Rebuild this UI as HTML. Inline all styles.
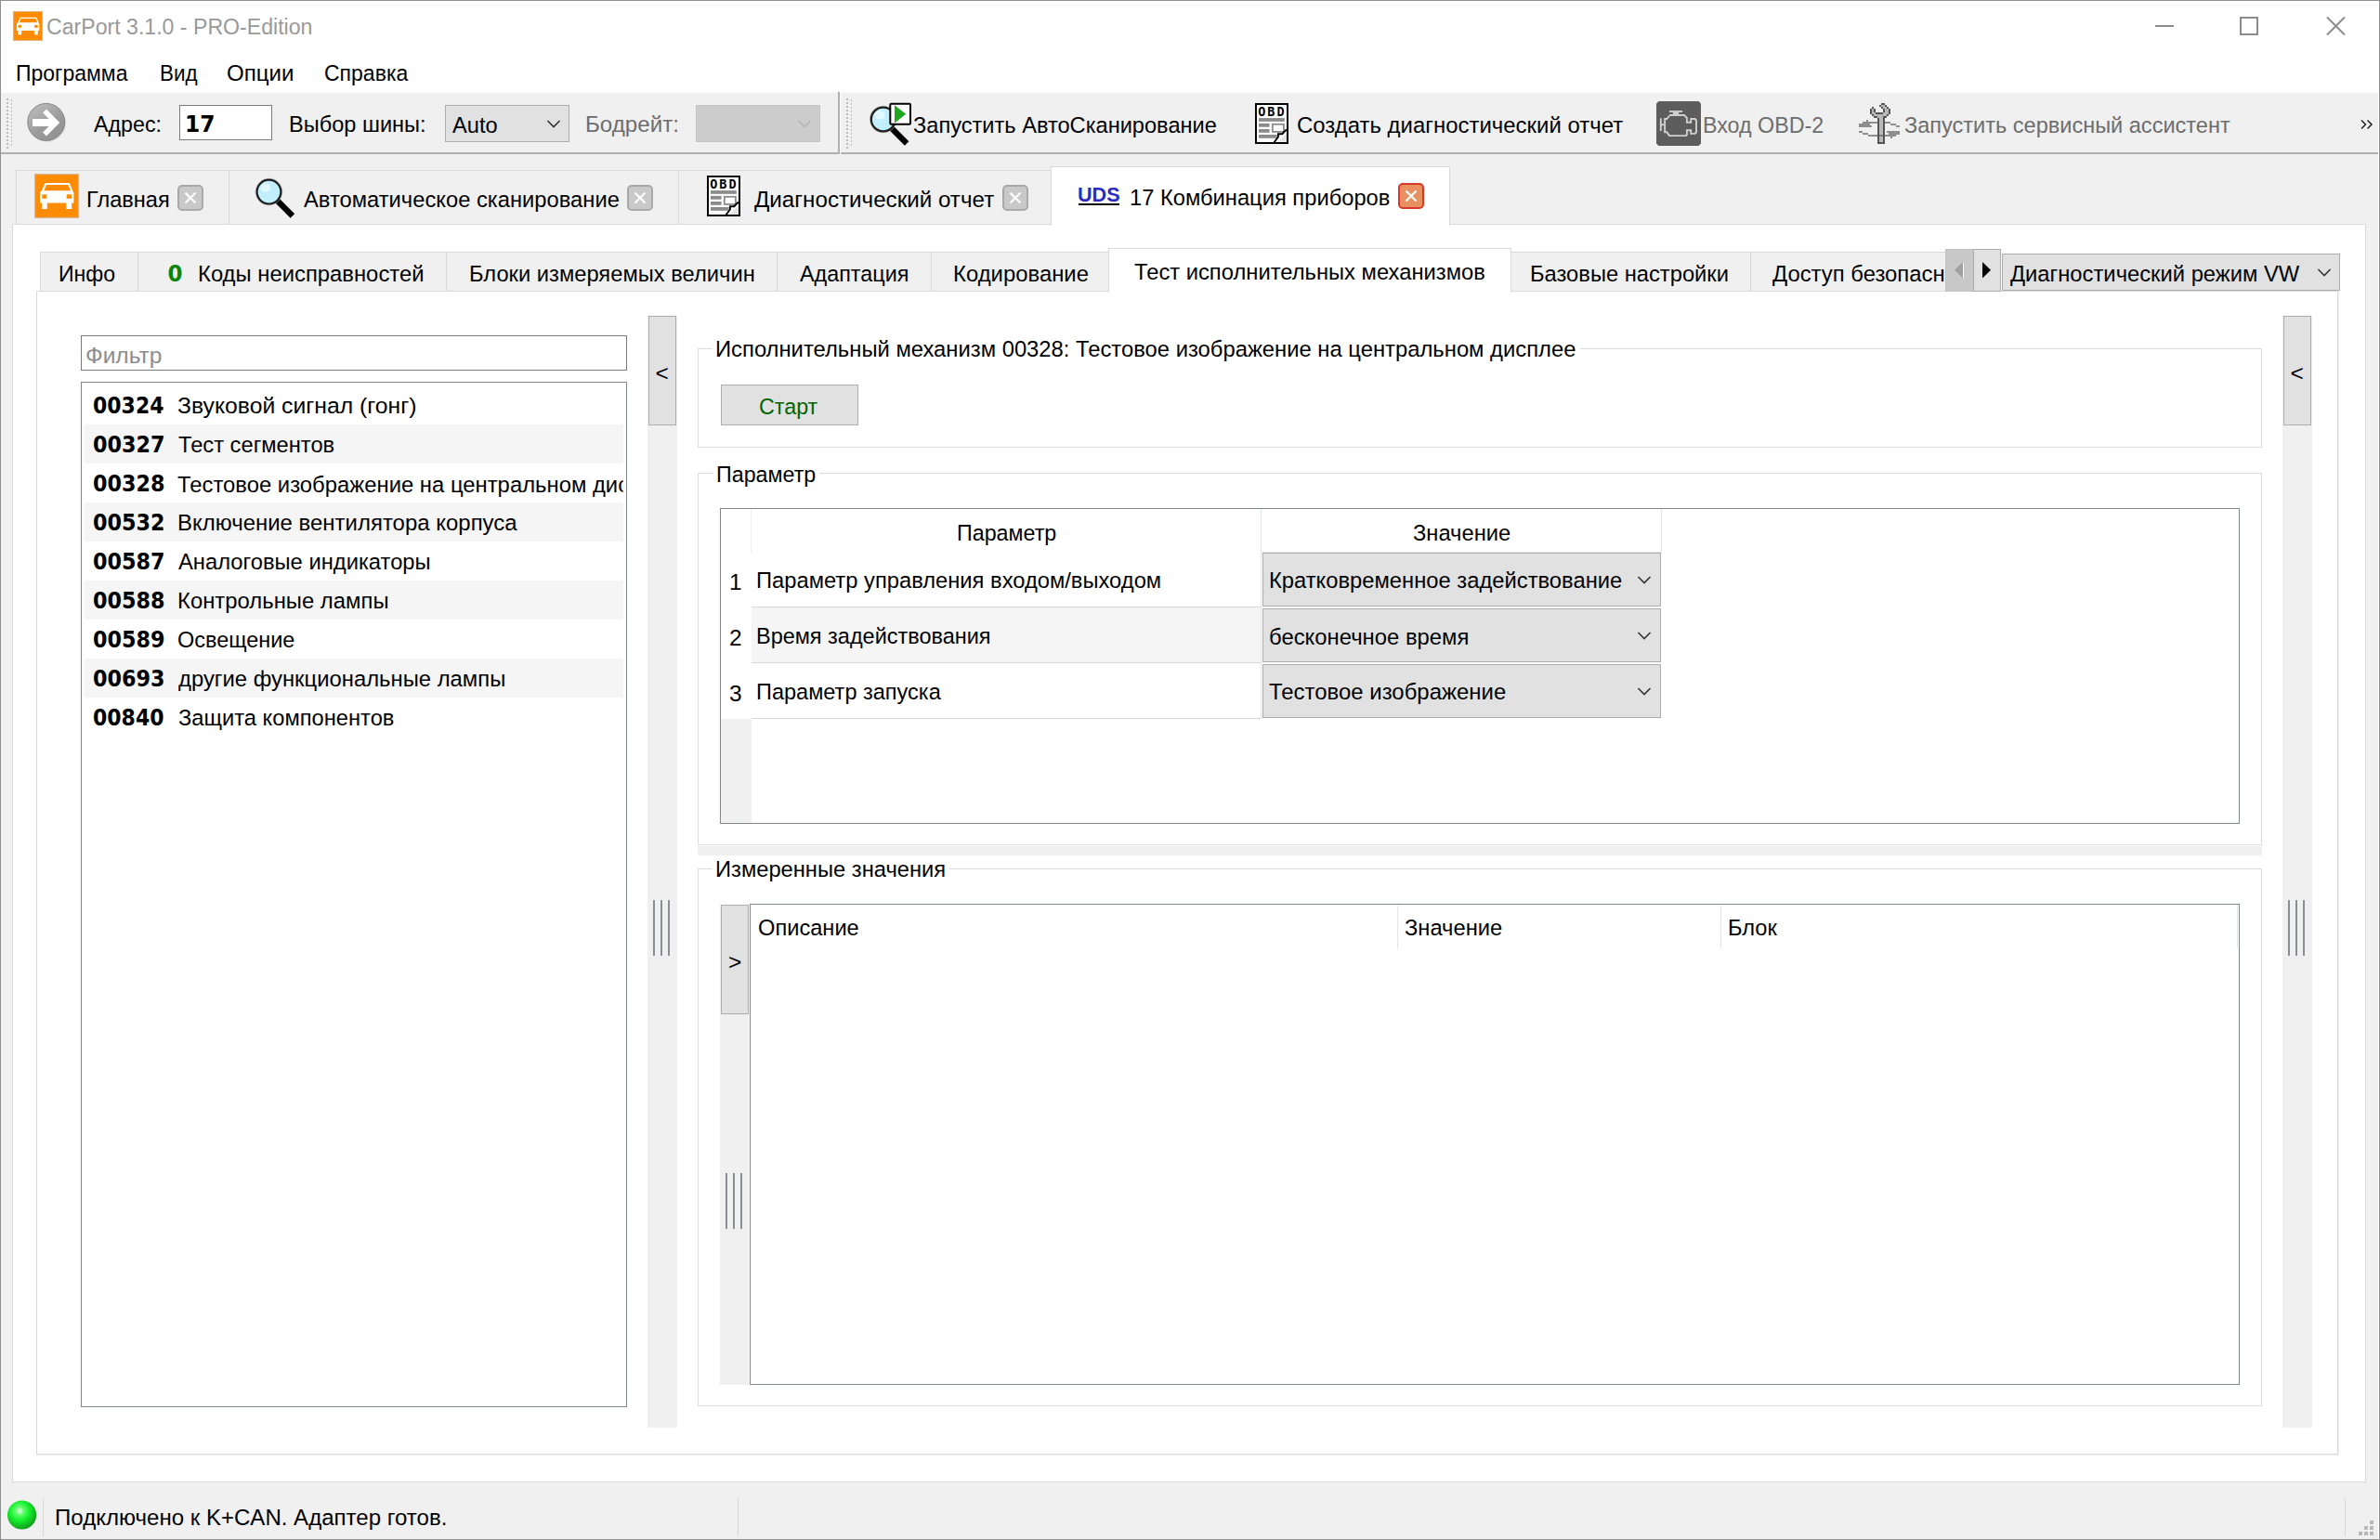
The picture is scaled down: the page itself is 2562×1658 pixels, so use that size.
<!DOCTYPE html>
<html lang="ru">
<head>
<meta charset="utf-8">
<title>CarPort 3.1.0 - PRO-Edition</title>
<style>
*{box-sizing:border-box;margin:0;padding:0}
html,body{width:2562px;height:1658px;overflow:hidden;background:#fff}
body{position:relative;font-family:"Liberation Sans","DejaVu Sans",sans-serif;font-size:24px;line-height:28px;color:#000}
.a{position:absolute}
.t{position:absolute;white-space:nowrap;font-size:24.500px;line-height:28px}
.b{font-family:"DejaVu Sans Condensed","Liberation Sans",sans-serif;font-weight:bold;font-size:24px}
.g{color:#6d6d6d}
.bg{background:#f0f0f0}
.btn{position:absolute;background:#e1e1e1;border:1px solid #adadad}
.box{position:absolute;border:1px solid #dcdcdc}
.lst{position:absolute;border:1px solid #828790;background:#fff}
.cx{position:absolute;width:28px;height:28px;border:2px solid #a9a9a9;border-radius:5px;background:#c9c9c9}
.cx svg{position:absolute;left:4px;top:4px}
.row{position:absolute;left:91px;width:580px;height:42px}
.row.alt{background:#f5f5f5}
.row .n{position:absolute;left:10px;top:7px;font-size:24px;line-height:28px;font-family:"DejaVu Sans Condensed","Liberation Sans",sans-serif;font-weight:bold}
.row .d{position:absolute;left:101px;top:7px;white-space:nowrap;overflow:hidden;width:479px;height:30px}
.gl{position:absolute;width:2px;background:#8a8d94}
.vs{position:absolute;width:1px;background:#d7d7d7}
</style>
</head>
<body>
<!-- window frame -->
<div class="a" id="frame" style="left:0;top:0;width:2562px;height:1658px;border:1px solid #8f8f8f;z-index:50;pointer-events:none"></div>

<!-- TITLE BAR -->
<div id="titlebar">
<svg class="a" id="ic-car1" style="left:14px;top:12px" width="32" height="32" viewBox="0 0 48 48"><rect x=".5" y=".5" width="47" height="47" fill="#ff8c00" stroke="#d9b088" stroke-width="1.600"/>
<path d="M8.800 19L12.200 11H37.100L40.500 19" fill="none" stroke="#fff" stroke-width="2.100" stroke-linejoin="round"/>
<path d="M9 18.300H39.400Q42.400 18.300 42.400 21.300V31.400H6V21.300Q6 18.300 9 18.300z" fill="#fff"/>
<rect x="8" y="31" width="5.800" height="7" fill="#fff"/><rect x="34.400" y="31" width="5.800" height="7" fill="#fff"/>
<rect x="8.300" y="22.300" width="5" height="4.500" fill="#ff8c00"/><rect x="34.700" y="22.300" width="5.300" height="4.500" fill="#ff8c00"/></svg>
<div id="t1" class="t" style="left:50.4px;top:15px;font-size:23px;color:#999;transform:scaleX(1.0048);transform-origin:0 0">CarPort 3.1.0 - PRO-Edition</div>
<svg class="a" style="left:2310px;top:8px" width="230" height="40" viewBox="0 0 230 40" fill="none" stroke="#8c8c8c" stroke-width="2">
<path d="M10 20h20"/><rect x="102" y="11" width="18" height="18"/><path d="M195 10.500l19 19M214 10.500l-19 19"/>
</svg>
</div>

<!-- MENU -->
<div id="menu">
<div id="t2" class="t" style="left:16.6px;top:65px;transform:scaleX(0.9381);transform-origin:0 0">Программа</div>
<div id="t3" class="t" style="left:171.5px;top:65px;transform:scaleX(0.9172);transform-origin:0 0">Вид</div>
<div id="t4" class="t" style="left:244.0px;top:65px;transform:scaleX(0.9832);transform-origin:0 0">Опции</div>
<div id="t5" class="t" style="left:349.0px;top:65px;transform:scaleX(0.9389);transform-origin:0 0">Справка</div>
</div>

<!-- TOOLBAR -->
<div id="toolbar">
<div class="a bg" style="left:1px;top:99px;width:2559px;height:1558px"></div>
<div class="a" style="left:1px;top:98px;width:2559px;height:2px;background:#fcfcfc"></div>
<div class="a" style="left:1px;top:164px;width:2559px;height:2px;background:#b0b0b0"></div>
<div class="a" style="left:902px;top:99px;width:2px;height:67px;background:#b0b0b0"></div>
<div class="a" style="left:904px;top:99px;width:1px;height:67px;background:#fcfcfc"></div>
</div>


<!-- toolbar 1 contents -->
<div class="a" id="grip1" style="left:7px;top:106px;width:2px;height:54px;background-image:repeating-linear-gradient(to bottom,#bcbcbc 0 2px,transparent 2px 4px)"></div>
<div class="a" style="left:12px;top:107px;width:1px;height:52px;background-image:repeating-linear-gradient(to bottom,#bcbcbc 0 2px,transparent 2px 4px)"></div>
<div class="a" id="grip2" style="left:911px;top:106px;width:2px;height:54px;background-image:repeating-linear-gradient(to bottom,#bcbcbc 0 2px,transparent 2px 4px)"></div>
<div class="a" style="left:916px;top:107px;width:1px;height:52px;background-image:repeating-linear-gradient(to bottom,#bcbcbc 0 2px,transparent 2px 4px)"></div>
<svg class="a" style="left:28px;top:109px" width="46" height="46" viewBox="0 0 46 46">
<defs><linearGradient id="gg" x1="0.15" y1="0" x2="0.85" y2="1"><stop offset="0" stop-color="#bdbdbd"/><stop offset=".55" stop-color="#9c9c9c"/><stop offset="1" stop-color="#8f8f8f"/></linearGradient></defs>
<circle cx="22.600" cy="23.400" r="20.300" fill="#cfcfcf" opacity=".6"/>
<circle cx="21.800" cy="22.400" r="20" fill="url(#gg)" stroke="#868686" stroke-width="1"/>
<path d="M7 19H24.700L18.100 12.400L21.900 8.600L36.300 23L21.900 37.400L18.100 33.600L24.700 27H7z" fill="#fff"/>
</svg>
<div id="t6" class="t" style="left:101.2px;top:120px;transform:scaleX(0.9491);transform-origin:0 0">Адрес:</div>
<div class="a" style="left:193px;top:113px;width:100px;height:38px;background:#fff;border:1px solid #7a7a7a"></div>
<div id="t7" class="t b" style="left:198.6px;top:120px;transform:scaleX(1.0825);transform-origin:0 0">17</div>
<div id="t8" class="t" style="left:311.0px;top:120px;transform:scaleX(0.9626);transform-origin:0 0">Выбор шины:</div>
<div class="btn" style="left:479px;top:113px;width:134px;height:40px"></div>
<div id="t9" class="t" style="left:486.8px;top:121px;transform:scaleX(0.9638);transform-origin:0 0">Auto</div>
<svg class="a" style="left:587px;top:127px" width="18" height="12" viewBox="0 0 18 12"><path d="M2.500 3l6.500 6.500l6.500-6.500" fill="none" stroke="#333" stroke-width="1.600"/></svg>
<div id="t10" class="t g" style="left:629.8px;top:120px;transform:scaleX(0.9858);transform-origin:0 0">Бодрейт:</div>
<div class="a" style="left:749px;top:113px;width:134px;height:40px;background:#ccc;border:1px solid #c4c4c4"></div>
<svg class="a" style="left:857px;top:127px" width="18" height="12" viewBox="0 0 18 12"><path d="M2.500 3l6.500 6.500l6.500-6.500" fill="none" stroke="#b4b4b4" stroke-width="1.600"/></svg>

<!-- toolbar 2 contents -->
<svg class="a" id="ic-scan" style="left:934px;top:108px" width="50" height="50" viewBox="0 0 50 50">
<path d="M25.25 29.50L42.15 46.40" stroke="#000" stroke-width="6.400" stroke-linecap="butt"/>
<circle cx="16.75" cy="20.5" r="14.200" fill="none" stroke="#9a9a9a" stroke-width="1.200" opacity=".55"/>
<circle cx="16.75" cy="20.5" r="12.900" fill="#c1effd" stroke="#1e1e1e" stroke-width="2.200"/>
<ellipse cx="13.25" cy="16.0" rx="5.500" ry="4.800" fill="#e3f8ff" opacity=".9"/>
<rect x="24.300" y="3.800" width="21.700" height="22" rx="1" fill="#fff" stroke="#000" stroke-width="2"/>
<path d="M29 5.200v19.200l12.200-9.600z" fill="#1fa722"/>
</svg>
<div id="t11" class="t" style="left:983.2px;top:121px;transform:scaleX(0.9635);transform-origin:0 0">Запустить АвтоСканирование</div>
<svg class="a ic-obd" style="left:1351px;top:111px" width="36" height="44" viewBox="0 0 36 44"><rect x="1" y="1" width="34" height="42" fill="#fff" stroke="#000" stroke-width="2"/>
<path d="M24.500 41.800L34 32.500V41.800z" fill="#e4e4e4"/>
<text x="3.300" y="13.600" font-family="DejaVu Sans Mono,Liberation Mono,monospace" font-weight="bold" font-size="13.500" letter-spacing="1.950" fill="#000">OBD</text>
<rect x="4" y="16.100" width="27.800" height="3.700" fill="#8b8b8b"/>
<rect x="4" y="21.900" width="11.600" height="3.800" fill="#8b8b8b"/>
<rect x="4" y="28" width="11.600" height="3.800" fill="#8b8b8b"/>
<rect x="4" y="34" width="19.700" height="3.800" fill="#8b8b8b"/>
<rect x="18.800" y="22.800" width="12.100" height="8.100" fill="#fff" stroke="#8b8b8b" stroke-width="1.800"/>
<path d="M20.600 42.200L24.900 36.500V33.200H29.300L33 29.300H34.500" fill="none" stroke="#000" stroke-width="1.900"/></svg>
<div id="t12" class="t" style="left:1396.0px;top:121px;transform:scaleX(0.9770);transform-origin:0 0">Создать диагностический отчет</div>
<svg class="a ic-eng" style="left:1783px;top:109px" width="48" height="48" viewBox="0 0 48 48">
<path d="M2.500 0H45.500L48 2.500V45.500L45.500 48H2.500L0 45.500V2.500z" fill="#5d5d5d"/>
<g fill="none" stroke="#d0d0d0" stroke-width="1.900" stroke-linejoin="miter">
<path d="M13.900 11H28"/>
<path d="M13.900 15H30L32.900 17.900V22.800H37.200V19H41.600L43 20.400V33.600L41.600 34.900H37.200V31.200H32.900V36L31.800 37.100H14L11.300 33.200H9.100V19H11.300L13.900 15.900"/>
<path d="M4.800 18.200V32M5.700 25.300H8.200"/>
</g>
<rect x="17.900" y="11.900" width="6.300" height="2.200" fill="#d0d0d0"/>
</svg>
<div id="t13" class="t g" style="left:1833.1px;top:121px;transform:scaleX(0.9488);transform-origin:0 0">Вход OBD-2</div>
<svg class="a ic-wr" style="left:2001px;top:111px" width="44" height="44" viewBox="0 0 44 44" shape-rendering="crispEdges"><rect x="8" y="18" width="2" height="2" fill="#8e8e8e"/><rect x="4" y="20" width="16" height="2" fill="#8e8e8e"/><rect x="28" y="20" width="6" height="2" fill="#8e8e8e"/><rect x="0" y="22" width="12" height="2" fill="#8e8e8e"/><rect x="34" y="22" width="6" height="2" fill="#8e8e8e"/><rect x="0" y="24" width="14" height="2" fill="#8e8e8e"/><rect x="40" y="24" width="4" height="2" fill="#8e8e8e"/><rect x="0" y="30" width="4" height="2" fill="#8e8e8e"/><rect x="30" y="30" width="14" height="2" fill="#8e8e8e"/><rect x="4" y="32" width="6" height="2" fill="#8e8e8e"/><rect x="32" y="32" width="12" height="2" fill="#8e8e8e"/><rect x="10" y="34" width="30" height="2" fill="#8e8e8e"/><rect x="34" y="36" width="2" height="2" fill="#8e8e8e"/><rect x="24" y="0" width="4" height="2" fill="#555"/><rect x="22" y="2" width="2" height="2" fill="#555"/><rect x="24" y="2" width="4" height="2" fill="#b8b8b8"/><rect x="28" y="2" width="2" height="2" fill="#555"/><rect x="14" y="4" width="2" height="2" fill="#555"/><rect x="24" y="4" width="2" height="2" fill="#555"/><rect x="26" y="4" width="4" height="2" fill="#b8b8b8"/><rect x="30" y="4" width="2" height="2" fill="#555"/><rect x="12" y="6" width="2" height="2" fill="#555"/><rect x="14" y="6" width="2" height="2" fill="#b8b8b8"/><rect x="16" y="6" width="2" height="2" fill="#555"/><rect x="26" y="6" width="2" height="2" fill="#555"/><rect x="28" y="6" width="4" height="2" fill="#b8b8b8"/><rect x="32" y="6" width="2" height="2" fill="#555"/><rect x="12" y="8" width="2" height="2" fill="#555"/><rect x="14" y="8" width="2" height="2" fill="#b8b8b8"/><rect x="16" y="8" width="2" height="2" fill="#555"/><rect x="26" y="8" width="2" height="2" fill="#555"/><rect x="28" y="8" width="4" height="2" fill="#b8b8b8"/><rect x="32" y="8" width="2" height="2" fill="#555"/><rect x="12" y="10" width="2" height="2" fill="#555"/><rect x="14" y="10" width="4" height="2" fill="#b8b8b8"/><rect x="18" y="10" width="8" height="2" fill="#555"/><rect x="26" y="10" width="6" height="2" fill="#b8b8b8"/><rect x="32" y="10" width="2" height="2" fill="#555"/><rect x="14" y="12" width="2" height="2" fill="#555"/><rect x="16" y="12" width="14" height="2" fill="#b8b8b8"/><rect x="30" y="12" width="2" height="2" fill="#555"/><rect x="16" y="14" width="4" height="2" fill="#555"/><rect x="20" y="14" width="6" height="2" fill="#b8b8b8"/><rect x="26" y="14" width="4" height="2" fill="#555"/><rect x="20" y="16" width="2" height="2" fill="#555"/><rect x="22" y="16" width="4" height="2" fill="#b8b8b8"/><rect x="26" y="16" width="2" height="2" fill="#555"/><rect x="20" y="18" width="2" height="2" fill="#555"/><rect x="22" y="18" width="4" height="2" fill="#b8b8b8"/><rect x="26" y="18" width="2" height="2" fill="#555"/><rect x="20" y="20" width="2" height="2" fill="#555"/><rect x="22" y="20" width="4" height="2" fill="#b8b8b8"/><rect x="26" y="20" width="2" height="2" fill="#555"/><rect x="20" y="22" width="2" height="2" fill="#555"/><rect x="22" y="22" width="4" height="2" fill="#b8b8b8"/><rect x="26" y="22" width="2" height="2" fill="#555"/><rect x="20" y="24" width="2" height="2" fill="#555"/><rect x="22" y="24" width="4" height="2" fill="#b8b8b8"/><rect x="26" y="24" width="2" height="2" fill="#555"/><rect x="20" y="26" width="2" height="2" fill="#555"/><rect x="22" y="26" width="4" height="2" fill="#b8b8b8"/><rect x="26" y="26" width="2" height="2" fill="#555"/><rect x="20" y="28" width="2" height="2" fill="#555"/><rect x="22" y="28" width="4" height="2" fill="#b8b8b8"/><rect x="26" y="28" width="2" height="2" fill="#555"/><rect x="20" y="30" width="2" height="2" fill="#555"/><rect x="22" y="30" width="4" height="2" fill="#b8b8b8"/><rect x="26" y="30" width="2" height="2" fill="#555"/><rect x="20" y="32" width="2" height="2" fill="#555"/><rect x="22" y="32" width="4" height="2" fill="#b8b8b8"/><rect x="26" y="32" width="2" height="2" fill="#555"/><rect x="20" y="34" width="2" height="2" fill="#555"/><rect x="22" y="34" width="4" height="2" fill="#b8b8b8"/><rect x="26" y="34" width="2" height="2" fill="#555"/><rect x="20" y="36" width="2" height="2" fill="#555"/><rect x="22" y="36" width="4" height="2" fill="#b8b8b8"/><rect x="26" y="36" width="2" height="2" fill="#555"/><rect x="20" y="38" width="2" height="2" fill="#555"/><rect x="22" y="38" width="4" height="2" fill="#b8b8b8"/><rect x="26" y="38" width="2" height="2" fill="#555"/><rect x="20" y="40" width="2" height="2" fill="#555"/><rect x="22" y="40" width="4" height="2" fill="#b8b8b8"/><rect x="26" y="40" width="2" height="2" fill="#555"/><rect x="20" y="42" width="8" height="2" fill="#555"/><rect x="22" y="34" width="4" height="2" fill="#7d7d7d"/></svg>
<div id="t14" class="t g" style="left:2050.0px;top:121px;transform:scaleX(0.9606);transform-origin:0 0">Запустить сервисный ассистент</div>
<svg class="a" style="left:2540px;top:127px" width="16" height="14" viewBox="0 0 16 14"><path d="M2 2.500l4.500 4.500l-4.500 4.500M8.500 2.500l4.500 4.500l-4.500 4.500" fill="none" stroke="#222" stroke-width="1.500"/></svg>


<!-- OUTER TABS -->
<div id="tabs1">
<div class="a" style="left:17px;top:183px;width:1115px;height:59px;border:1px solid #d9d9d9;border-bottom:none;background:#f0f0f0"></div>
<div class="vs" style="left:246px;top:184px;height:57px;background:#d9d9d9"></div>
<div class="vs" style="left:730px;top:184px;height:57px;background:#d9d9d9"></div>
<!-- outer panel -->
<div class="a" style="left:13px;top:241px;width:2534px;height:1355px;background:#fff;border:1px solid #d9d9d9"></div>
<!-- active tab -->
<div class="a" style="left:1131px;top:179px;width:430px;height:64px;background:#fff;border:1px solid #d9d9d9;border-bottom:none"></div>
<svg class="a" id="ic-car2" style="left:37px;top:187px" width="48" height="48" viewBox="0 0 48 48"><rect x=".5" y=".5" width="47" height="47" fill="#ff8c00" stroke="#d9b088" stroke-width="1.600"/>
<path d="M8.800 19L12.200 11H37.100L40.500 19" fill="none" stroke="#fff" stroke-width="2.100" stroke-linejoin="round"/>
<path d="M9 18.300H39.400Q42.400 18.300 42.400 21.300V31.400H6V21.300Q6 18.300 9 18.300z" fill="#fff"/>
<rect x="8" y="31" width="5.800" height="7" fill="#fff"/><rect x="34.400" y="31" width="5.800" height="7" fill="#fff"/>
<rect x="8.300" y="22.300" width="5" height="4.500" fill="#ff8c00"/><rect x="34.700" y="22.300" width="5.300" height="4.500" fill="#ff8c00"/></svg>
<div id="t15" class="t" style="left:93.4px;top:201px;transform:scaleX(0.9622);transform-origin:0 0">Главная</div>
<div class="cx" style="left:191px;top:199px"><svg width="16" height="16" viewBox="0 0 16 16"><path d="M2.500 2.500l11 11M13.500 2.500l-11 11" stroke="#fff" stroke-width="2.200" fill="none"/></svg></div>
<svg class="a" id="ic-mag" style="left:272px;top:189px" width="48" height="48" viewBox="0 0 48 48">
<path d="M26.00 26.60L42.90 43.50" stroke="#000" stroke-width="6.400" stroke-linecap="butt"/>
<circle cx="17.5" cy="17.6" r="14.200" fill="none" stroke="#9a9a9a" stroke-width="1.200" opacity=".55"/>
<circle cx="17.5" cy="17.6" r="12.900" fill="#c1effd" stroke="#1e1e1e" stroke-width="2.200"/>
<ellipse cx="14.0" cy="13.100000000000001" rx="5.500" ry="4.800" fill="#e3f8ff" opacity=".9"/>
</svg>
<div id="t16" class="t" style="left:327.0px;top:201px;transform:scaleX(0.9690);transform-origin:0 0">Автоматическое сканирование</div>
<div class="cx" style="left:675px;top:199px"><svg width="16" height="16" viewBox="0 0 16 16"><path d="M2.500 2.500l11 11M13.500 2.500l-11 11" stroke="#fff" stroke-width="2.200" fill="none"/></svg></div>
<svg class="a ic-obd" style="left:761px;top:189px" width="36" height="44" viewBox="0 0 36 44"><rect x="1" y="1" width="34" height="42" fill="#fff" stroke="#000" stroke-width="2"/>
<path d="M24.500 41.800L34 32.500V41.800z" fill="#e4e4e4"/>
<text x="3.300" y="13.600" font-family="DejaVu Sans Mono,Liberation Mono,monospace" font-weight="bold" font-size="13.500" letter-spacing="1.950" fill="#000">OBD</text>
<rect x="4" y="16.100" width="27.800" height="3.700" fill="#8b8b8b"/>
<rect x="4" y="21.900" width="11.600" height="3.800" fill="#8b8b8b"/>
<rect x="4" y="28" width="11.600" height="3.800" fill="#8b8b8b"/>
<rect x="4" y="34" width="19.700" height="3.800" fill="#8b8b8b"/>
<rect x="18.800" y="22.800" width="12.100" height="8.100" fill="#fff" stroke="#8b8b8b" stroke-width="1.800"/>
<path d="M20.600 42.200L24.900 36.500V33.200H29.300L33 29.300H34.500" fill="none" stroke="#000" stroke-width="1.900"/></svg>
<div id="t17" class="t" style="left:811.8px;top:201px;transform:scaleX(0.9864);transform-origin:0 0">Диагностический отчет</div>
<div class="cx" style="left:1079px;top:199px"><svg width="16" height="16" viewBox="0 0 16 16"><path d="M2.500 2.500l11 11M13.500 2.500l-11 11" stroke="#fff" stroke-width="2.200" fill="none"/></svg></div>
<div id="t18" class="t" style="left:1160.2px;top:198px;font-size:21.500px;font-weight:bold;color:#2a2ac4;line-height:24px;transform:scaleX(1.0046);transform-origin:0 0">UDS</div>
<div class="a" style="left:1161px;top:219px;width:44px;height:2px;background:#000"></div>
<div id="t19" class="t" style="left:1216.0px;top:199px;transform:scaleX(0.9678);transform-origin:0 0">17 Комбинация приборов</div>
<div class="cx" style="left:1505px;top:197px;background:#e8905f;border-color:#d9372a"><svg width="16" height="16" viewBox="0 0 16 16"><path d="M2.500 2.500l11 11M13.500 2.500l-11 11" stroke="#fff" stroke-width="2.200" fill="none"/></svg></div>
</div>

<!-- INNER TABS -->
<div id="tabs2">
<div class="a" style="left:43px;top:271px;width:2052px;height:43px;border:1px solid #d9d9d9;border-bottom:none;border-right:none;background:#f0f0f0"></div>
<div class="vs" style="left:148px;top:272px;height:41px;background:#d9d9d9"></div>
<div class="vs" style="left:480px;top:272px;height:41px;background:#d9d9d9"></div>
<div class="vs" style="left:836px;top:272px;height:41px;background:#d9d9d9"></div>
<div class="vs" style="left:1002px;top:272px;height:41px;background:#d9d9d9"></div>
<div class="vs" style="left:1884px;top:272px;height:41px;background:#d9d9d9"></div>
<!-- inner panel -->
<div class="a" style="left:39px;top:313px;width:2478px;height:1253px;background:#fff;border:1px solid #d9d9d9"></div>
<div class="a" style="left:2517px;top:314px;width:1px;height:1253px;background:#efefef"></div>
<div class="a" style="left:40px;top:1566px;width:2478px;height:1px;background:#efefef"></div>
<div class="a" style="left:1193px;top:267px;width:434px;height:48px;background:#fff;border:1px solid #d9d9d9;border-bottom:none"></div>
<div id="t20" class="t" style="left:63.0px;top:281px;transform:scaleX(0.9423);transform-origin:0 0">Инфо</div>
<div id="t21" class="t b" style="left:180.5px;top:280px;color:#0a850a;font-size:25.500px">0</div>
<div id="t22" class="t" style="left:213.0px;top:281px;transform:scaleX(0.9726);transform-origin:0 0">Коды неисправностей</div>
<div id="t23" class="t" style="left:504.8px;top:281px;transform:scaleX(0.9682);transform-origin:0 0">Блоки измеряемых величин</div>
<div id="t24" class="t" style="left:860.8px;top:281px;transform:scaleX(0.9537);transform-origin:0 0">Адаптация</div>
<div id="t25" class="t" style="left:1026.2px;top:281px;transform:scaleX(0.9743);transform-origin:0 0">Кодирование</div>
<div id="t26" class="t" style="left:1221.0px;top:279px;transform:scaleX(0.9693);transform-origin:0 0">Тест исполнительных механизмов</div>
<div id="t27" class="t" style="left:1647.0px;top:281px;transform:scaleX(0.9679);transform-origin:0 0">Базовые настройки</div>
<div id="t28" class="t" style="left:1908.4px;top:281px;width:190.7px;overflow:hidden;transform:scaleX(0.9734);transform-origin:0 0">Доступ безопасности</div>
<div class="a" style="left:2094px;top:268px;width:31px;height:46px;background:#c8c8c8;border:1px solid #c0c0c0"></div>
<svg class="a" style="left:2102px;top:280px" width="14" height="22" viewBox="0 0 14 22"><path d="M11 2v17.500l-9-8.750z" fill="#a0a0a0"/><path d="M11.500 3v16.500" stroke="#fff" stroke-width="1"/></svg>
<div class="btn" style="left:2124px;top:268px;width:30px;height:46px"></div>
<svg class="a" style="left:2131px;top:280px" width="14" height="22" viewBox="0 0 14 22"><path d="M3 2v17.500l9-8.750z" fill="#000"/></svg>
<div class="btn" style="left:2155px;top:273px;width:364px;height:40px"></div>
<div id="t29" class="t" style="left:2163.6px;top:281px;transform:scaleX(0.9699);transform-origin:0 0">Диагностический режим VW</div>
<svg class="a" style="left:2493px;top:287px" width="18" height="12" viewBox="0 0 18 12"><path d="M2.500 3l6.500 6.500l6.500-6.500" fill="none" stroke="#333" stroke-width="1.600"/></svg>
</div>

<!-- STATUS BAR -->
<div id="status">
<svg class="a" style="left:6px;top:1613px" width="36" height="36" viewBox="0 0 36 36">
<defs><radialGradient id="led" cx=".42" cy=".36" r=".62"><stop offset="0" stop-color="#ecffec"/><stop offset=".24" stop-color="#5cff68"/><stop offset=".55" stop-color="#14ee2c"/><stop offset="1" stop-color="#13a31d"/></radialGradient></defs>
<circle cx="17.600" cy="18" r="15.600" fill="url(#led)"/>
</svg>
<div class="vs" style="left:46px;top:1613px;height:41px"></div>
<div class="vs" style="left:794px;top:1613px;height:41px"></div>
<div class="vs" style="left:2524px;top:1613px;height:41px"></div>
<div id="t30" class="t" style="left:59.0px;top:1620px;transform:scaleX(0.9814);transform-origin:0 0">Подключено к K+CAN. Адаптер готов.</div>
<svg class="a" style="left:2539px;top:1637px" width="16" height="16" viewBox="0 0 16 16" fill="#b8b8b8" shape-rendering="crispEdges"><rect x="12" y="0" width="4" height="4"/><rect x="6" y="6" width="4" height="4"/><rect x="12" y="6" width="4" height="4"/><rect x="0" y="12" width="4" height="4"/><rect x="6" y="12" width="4" height="4"/><rect x="12" y="12" width="4" height="4"/></svg>
</div>


<!-- LEFT LIST -->
<div id="left">
<div class="a" style="left:87px;top:361px;width:588px;height:38px;border:1px solid #7a7a7a;background:#fff"></div>
<div id="t31" class="t" style="left:91.8px;top:368.5px;color:#8c8c8c;transform:scaleX(1.0005);transform-origin:0 0">Фильтр</div>
<div class="lst" style="left:87px;top:411px;width:588px;height:1104px"></div>
<div id="t32" class="t b" style="left:100.4px;top:423px;transform:scaleX(1.0190);transform-origin:0 0">00324</div>
<div id="t33" class="t" style="left:190.8px;top:423px;transform:scaleX(1.0100);transform-origin:0 0">Звуковой сигнал (гонг)</div>
<div class="a" style="left:91px;top:457px;width:580px;height:42px;background:#f5f5f5"></div>
<div id="t34" class="t b" style="left:100.4px;top:465px;transform:scaleX(1.0330);transform-origin:0 0">00327</div>
<div id="t35" class="t" style="left:191.8px;top:465px;transform:scaleX(0.9673);transform-origin:0 0">Тест сегментов</div>
<div id="t36" class="t b" style="left:100.4px;top:507px;transform:scaleX(1.0326);transform-origin:0 0">00328</div>
<div id="t37" class="t" style="left:191.3px;top:507.5px;width:493.0px;overflow:hidden;transform:scaleX(0.9731);transform-origin:0 0">Тестовое изображение на центральном дисплее</div>
<div class="a" style="left:91px;top:541px;width:580px;height:42px;background:#f5f5f5"></div>
<div id="t38" class="t b" style="left:100.4px;top:549px;transform:scaleX(1.0330);transform-origin:0 0">00532</div>
<div id="t39" class="t" style="left:190.8px;top:549px;transform:scaleX(0.9780);transform-origin:0 0">Включение вентилятора корпуса</div>
<div id="t40" class="t b" style="left:100.4px;top:591px;transform:scaleX(1.0328);transform-origin:0 0">00587</div>
<div id="t41" class="t" style="left:191.8px;top:591px;transform:scaleX(0.9697);transform-origin:0 0">Аналоговые индикаторы</div>
<div class="a" style="left:91px;top:625px;width:580px;height:42px;background:#f5f5f5"></div>
<div id="t42" class="t b" style="left:100.4px;top:633px;transform:scaleX(1.0331);transform-origin:0 0">00588</div>
<div id="t43" class="t" style="left:190.8px;top:633px;transform:scaleX(0.9739);transform-origin:0 0">Контрольные лампы</div>
<div id="t44" class="t b" style="left:100.4px;top:675px;transform:scaleX(1.0326);transform-origin:0 0">00589</div>
<div id="t45" class="t" style="left:190.8px;top:675px;transform:scaleX(0.9566);transform-origin:0 0">Освещение</div>
<div class="a" style="left:91px;top:709px;width:580px;height:42px;background:#f5f5f5"></div>
<div id="t46" class="t b" style="left:100.4px;top:717px;transform:scaleX(1.0330);transform-origin:0 0">00693</div>
<div id="t47" class="t" style="left:191.8px;top:717px;transform:scaleX(0.9728);transform-origin:0 0">другие функциональные лампы</div>
<div id="t48" class="t b" style="left:100.4px;top:759px;transform:scaleX(1.0190);transform-origin:0 0">00840</div>
<div id="t49" class="t" style="left:191.8px;top:759px;transform:scaleX(0.9674);transform-origin:0 0">Защита компонентов</div>
</div>

<!-- SPLITTER LEFT -->
<div class="a bg" style="left:697px;top:340px;width:32px;height:1197px"></div>
<div class="btn" style="left:698px;top:340px;width:30px;height:118px"></div>
<div id="t50" class="t" style="left:705.5px;top:387.5px">&lt;</div>
<div class="gl" style="left:703px;top:969px;height:60px"></div><div class="gl" style="left:711px;top:969px;height:60px"></div><div class="gl" style="left:719px;top:969px;height:60px"></div>

<!-- SPLITTER RIGHT -->
<div class="a bg" style="left:2457px;top:340px;width:32px;height:1197px"></div>
<div class="btn" style="left:2458px;top:340px;width:30px;height:118px"></div>
<div id="t51" class="t" style="left:2465.5px;top:387.5px">&lt;</div>
<div class="gl" style="left:2463px;top:969px;height:60px"></div><div class="gl" style="left:2471px;top:969px;height:60px"></div><div class="gl" style="left:2479px;top:969px;height:60px"></div>

<!-- GROUP 1 -->
<div class="box" style="left:751px;top:375px;width:1684px;height:107px"></div>
<div class="a gt" style="left:767px;top:371px;width:934px;height:10px;background:#fff"></div>
<div id="t52" class="t" style="left:770.0px;top:362px;transform:scaleX(0.9712);transform-origin:0 0">Исполнительный механизм 00328: Тестовое изображение на центральном дисплее</div>
<div class="btn" style="left:776px;top:414px;width:148px;height:44px"></div>
<div id="t53" class="t" style="left:817.4px;top:424px;color:#006400;transform:scaleX(0.9504);transform-origin:0 0">Старт</div>

<!-- GROUP 2 -->
<div class="box" style="left:751px;top:509px;width:1684px;height:401px"></div>
<div class="a gt" style="left:767px;top:505px;width:115px;height:10px;background:#fff"></div>
<div id="t54" class="t" style="left:770.8px;top:497px;transform:scaleX(0.9494);transform-origin:0 0">Параметр</div>
<div class="lst" style="left:775px;top:547px;width:1636px;height:340px"></div>
<div class="a bg" style="left:776px;top:774px;width:33px;height:112px"></div>
<div class="a" style="left:809px;top:654px;width:549px;height:59px;background:#f5f5f5"></div>
<div class="a" style="left:809px;top:653px;width:549px;height:1px;background:#d8d8d8"></div>
<div class="a" style="left:809px;top:713px;width:549px;height:1px;background:#d8d8d8"></div>
<div class="a" style="left:809px;top:773px;width:549px;height:1px;background:#d8d8d8"></div>
<div class="vs" style="left:1357px;top:548px;height:226px;background:#e5e5e5"></div>
<div class="vs" style="left:1788px;top:548px;height:47px;background:#e5e5e5"></div>
<div class="vs" style="left:808px;top:548px;height:47px;background:#f0f0f0"></div>
<div class="a" style="left:1358px;top:594px;width:431px;height:1px;background:#e5e5e5"></div>
<div id="t55" class="t" style="left:1030.0px;top:560px;transform:scaleX(0.9491);transform-origin:0 0">Параметр</div>
<div id="t56" class="t" style="left:1521.4px;top:560px;transform:scaleX(0.9683);transform-origin:0 0">Значение</div>
<div id="t57" class="t" style="left:785px;top:612.5px">1</div>
<div id="t58" class="t" style="left:785px;top:672.5px">2</div>
<div id="t59" class="t" style="left:785px;top:732.5px">3</div>
<div id="t60" class="t" style="left:814.0px;top:611px;transform:scaleX(0.9685);transform-origin:0 0">Параметр управления входом/выходом</div>
<div id="t61" class="t" style="left:814.0px;top:671px;transform:scaleX(0.9576);transform-origin:0 0">Время задействования</div>
<div id="t62" class="t" style="left:814.0px;top:731px;transform:scaleX(0.9599);transform-origin:0 0">Параметр запуска</div>
<div class="btn" style="left:1359px;top:595px;width:429px;height:58px"></div>
<div id="t63" class="t" style="left:1365.6px;top:611px;transform:scaleX(0.9695);transform-origin:0 0">Кратковременное задействование</div>
<svg class="a" style="left:1761px;top:618px" width="18" height="12" viewBox="0 0 18 12"><path d="M2.500 3l6.500 6.500l6.500-6.500" fill="none" stroke="#333" stroke-width="1.600"/></svg>
<div class="btn" style="left:1359px;top:655px;width:429px;height:58px"></div>
<div id="t64" class="t" style="left:1366.0px;top:672px;transform:scaleX(0.9733);transform-origin:0 0">бесконечное время</div>
<svg class="a" style="left:1761px;top:678px" width="18" height="12" viewBox="0 0 18 12"><path d="M2.500 3l6.500 6.500l6.500-6.500" fill="none" stroke="#333" stroke-width="1.600"/></svg>
<div class="btn" style="left:1359px;top:715px;width:429px;height:58px"></div>
<div id="t65" class="t" style="left:1366.0px;top:731px;transform:scaleX(0.9769);transform-origin:0 0">Тестовое изображение</div>
<svg class="a" style="left:1761px;top:738px" width="18" height="12" viewBox="0 0 18 12"><path d="M2.500 3l6.500 6.500l6.500-6.500" fill="none" stroke="#333" stroke-width="1.600"/></svg>


<!-- H SPLITTER -->
<div class="a bg" style="left:751px;top:911px;width:1684px;height:10px"></div>

<!-- GROUP 3 -->
<div class="box" style="left:751px;top:935px;width:1684px;height:579px"></div>
<div class="a gt" style="left:767px;top:931px;width:255px;height:10px;background:#fff"></div>
<div id="t66" class="t" style="left:770.3px;top:922px;transform:scaleX(0.9677);transform-origin:0 0">Измеренные значения</div>
<div class="a bg" style="left:775px;top:974px;width:31px;height:517px"></div>
<div class="btn" style="left:776px;top:974px;width:30px;height:118px"></div>
<div id="t67" class="t" style="left:784px;top:1021.5px">&gt;</div>
<div class="gl" style="left:781px;top:1263px;height:60px"></div><div class="gl" style="left:789px;top:1263px;height:60px"></div><div class="gl" style="left:797px;top:1263px;height:60px"></div>
<div class="lst" style="left:807px;top:973px;width:1604px;height:518px"></div>
<div class="vs" style="left:1504px;top:975px;height:46px;background:#e5e5e5"></div>
<div class="vs" style="left:1852px;top:975px;height:46px;background:#e5e5e5"></div>
<div class="vs" style="left:2408px;top:975px;height:46px;background:#e5e5e5"></div>
<div id="t68" class="t" style="left:816.2px;top:985px;transform:scaleX(0.9646);transform-origin:0 0">Описание</div>
<div id="t69" class="t" style="left:1512.2px;top:985px;transform:scaleX(0.9683);transform-origin:0 0">Значение</div>
<div id="t70" class="t" style="left:1860.0px;top:985px;transform:scaleX(0.9667);transform-origin:0 0">Блок</div>

</body>
</html>
